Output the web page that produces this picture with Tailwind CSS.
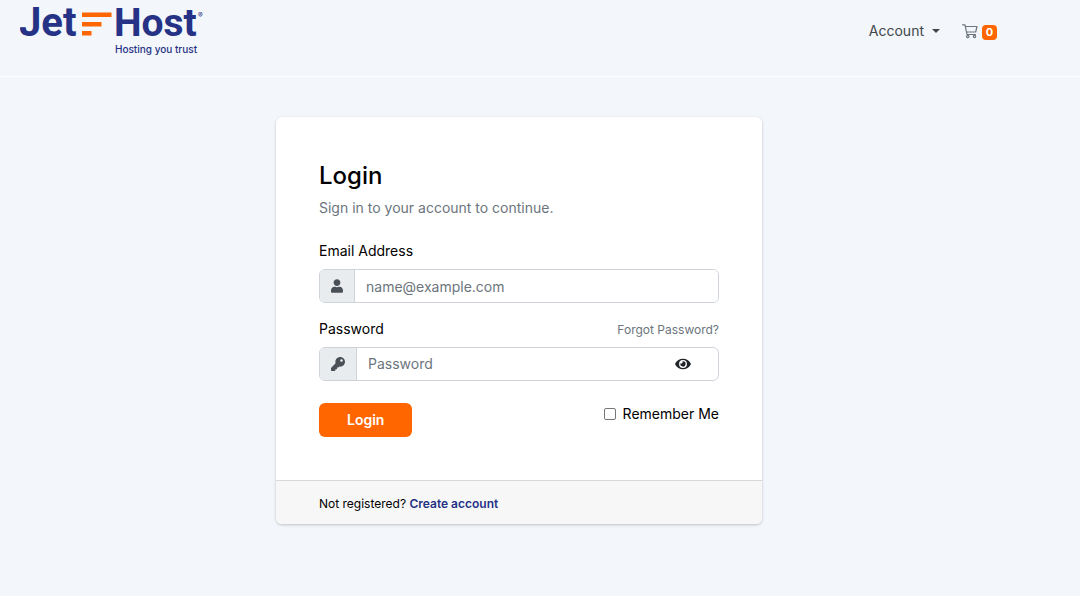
<!DOCTYPE html>
<html lang="en">
<head>
  <meta charset="UTF-8" />
  <meta name="viewport" content="width=device-width, initial-scale=1.0" />
  <title>Login - JetHost</title>
  <script src="https://cdn.jsdelivr.net/npm/@tailwindcss/browser@4"></script>
</head>
<body class="min-h-screen bg-[#f3f6fa] font-['Inter',sans-serif] text-[14px] text-black">

  <!-- HEADER -->
  <header class="flex h-[77px] items-start justify-between border-b border-white pl-5 pr-[83px]">
    <a href="#" class="block">
      <svg class="h-[60px] w-[186px]" viewBox="0 0 186 60" role="img" aria-label="JetHost">
        <g fill="#253285">
          <text x="-1" y="36" font-family="Roboto, sans-serif" font-size="40" font-weight="700">Jet</text>
          <text x="94" y="36" font-family="Roboto, sans-serif" font-size="39" font-weight="700">Host</text>
          <text x="95" y="53" font-family="Inter, sans-serif" font-size="10" font-weight="500">Hosting you trust</text>
          <text x="178" y="18" font-family="Inter, sans-serif" font-size="7">®</text>
        </g>
        <g fill="#ff6600">
          <path d="M62 12.500h29.500v4.500h-29.500z" />
          <path d="M62 22h19.500v4.500h-19.500z" />
          <path d="M62 31h9.500v4.500h-9.500z" />
        </g>
      </svg>
    </a>

    <nav class="flex items-center pt-5">
      <button type="button" class="flex items-center gap-2 pb-[2px] text-[14px] leading-[22px] text-[#41464b]">
        Account
        <svg class="h-1 w-2" viewBox="0 0 8 4" fill="currentColor"><path d="M0 0h8L4 4z" /></svg>
      </button>
      <a href="#" class="ml-[22px] flex items-center gap-1" aria-label="Shopping cart">
        <svg class="h-4 w-4" viewBox="0 0 16 16" fill="none" stroke="#6c757d" stroke-width="1.200" stroke-linecap="round" stroke-linejoin="round">
          <path d="M.6 .8H3L5 10.500h8.500M3.300 2.500h11.700l-1.300 5.500H4.500" />
          <circle cx="5.800" cy="12.500" r="1.200" />
          <circle cx="12.500" cy="12.500" r="1.200" />
        </svg>
        <span class="flex h-[15px] w-[15px] items-center justify-center rounded bg-[#ff6600] text-[11px] font-bold text-white">0</span>
      </a>
    </nav>
  </header>

  <!-- LOGIN -->
  <main class="flex justify-center py-10 pr-[42px]">
    <div class="w-full max-w-[486px] overflow-hidden rounded-md bg-white shadow-[0_1px_3px_rgba(0,0,0,0.22)]">
      <form class="p-[43px]">
        <h1 class="text-[24px] leading-8 font-medium">Login</h1>
        <p class="mt-[6px] leading-5 text-[#6c757d]">Sign in to your account to continue.</p>

        <label for="email" class="mt-[23px] block leading-5">Email Address</label>
        <div class="mt-2 flex h-[34px] overflow-hidden rounded-md border border-[#ced4da]">
          <span class="flex items-center border-r border-[#ced4da] bg-[#e9ecef] px-[11px]">
            <svg class="h-[14px] w-3" viewBox="0 0 448 512" fill="#495057"><path d="M224 256c70.700 0 128-57.300 128-128S294.700 0 224 0 96 57.300 96 128s57.300 128 128 128zm89.600 32h-16.700c-22.200 10.200-46.900 16-72.900 16s-50.600-5.800-72.900-16h-16.700C60.200 288 0 348.200 0 422.400V464c0 26.500 21.500 48 48 48h352c26.500 0 48-21.500 48-48v-41.600c0-74.200-60.200-134.400-134.400-134.400z" /></svg>
          </span>
          <input type="email" id="email" placeholder="name@example.com" class="min-w-0 flex-1 bg-white px-[11px] text-[14px] placeholder:text-[#6c757d]">
        </div>

        <div class="mt-4 flex items-end justify-between">
          <label for="password" class="leading-5">Password</label>
          <a href="#" class="text-[12px] leading-[18px] text-[#6c757d]">Forgot Password?</a>
        </div>
        <div class="mt-2 flex h-[34px] overflow-hidden rounded-md border border-[#ced4da]">
          <span class="flex items-center border-r border-[#ced4da] bg-[#e9ecef] px-[11px]">
            <svg class="h-[14px] w-[14px]" viewBox="0 0 512 512" fill="#495057"><path d="M512 176c0 97.200-78.800 176-176 176-11.200 0-22.200-1.100-32.800-3.100l-24 27A24 24 0 0 1 261.200 384H224v40c0 13.300-10.700 24-24 24h-40v40c0 13.300-10.700 24-24 24H24c-13.300 0-24-10.700-24-24v-78.100c0-6.400 2.500-12.500 7-17l161.800-161.800C163.100 213.800 160 195.300 160 176 160 78.800 238.800 0 336 0c97.500 0 176 78.500 176 176zM336 128c0 26.500 21.500 48 48 48s48-21.500 48-48-21.500-48-48-48-48 21.500-48 48z" /></svg>
          </span>
          <input type="password" id="password" placeholder="Password" class="min-w-0 flex-1 bg-white px-[11px] pb-[2px] text-[14px] placeholder:text-[#6c757d]">
          <button type="button" class="px-[27px]" aria-label="Show password">
            <svg class="h-[14px] w-4" viewBox="0 0 576 512" fill="#212529"><path d="M572.500 241.400C518.300 135.600 410.900 64 288 64S57.700 135.600 3.500 241.400a32.400 32.400 0 0 0 0 29.200C57.700 376.400 165.100 448 288 448s230.300-71.600 284.500-177.400a32.400 32.400 0 0 0 0-29.200zM288 400a144 144 0 1 1 144-144 143.900 143.900 0 0 1-144 144zm0-240a95.300 95.300 0 0 0-25.300 3.800 47.900 47.900 0 0 1-66.900 66.900A95.800 95.800 0 1 0 288 160z" /></svg>
          </button>
        </div>

        <div class="mt-[22px] flex items-start justify-between">
          <button type="submit" class="h-[34px] rounded-md bg-[#ff6600] px-7 pb-[2px] text-[14px] font-semibold text-white">Login</button>
          <label class="flex items-center gap-[7px] leading-[22px]">
            <input type="checkbox" class="h-3 w-3 appearance-none rounded-xs border border-[#767676] bg-white checked:bg-[#ff6600]">
            Remember Me
          </label>
        </div>
      </form>

      <div class="border-t border-[#d8d8d9] bg-[#f7f7f7] px-[43px] pt-[14px] pb-[11px] text-[12px] leading-[18px]">
        Not registered? <a href="#" class="font-semibold text-[#253285]">Create account</a>
      </div>
    </div>
  </main>

</body>
</html>
